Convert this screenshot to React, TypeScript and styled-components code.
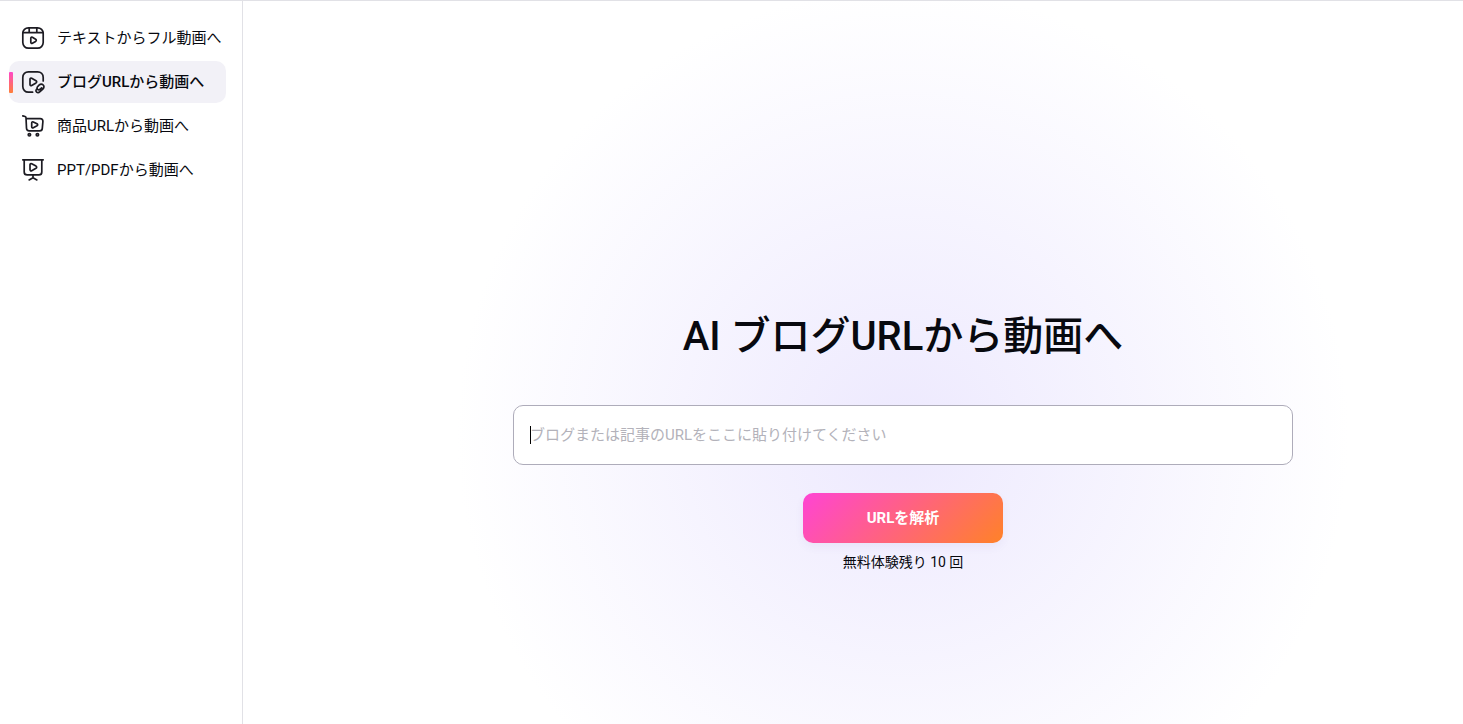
import React from "react";
import styled, { createGlobalStyle } from "styled-components";

const GlobalStyle = createGlobalStyle`
  *, *::before, *::after { box-sizing: border-box; }
  body {
    margin: 0;
    background: #fff;
    color: #08090f;
    font-family: Roboto, "Noto Sans CJK JP", sans-serif;
    font-size: 15px;
    line-height: 24px;
  }
`;

const Page = styled.div`
  display: flex;
  min-height: 100vh;
  border-top: 1px solid #e1e1e6;
`;

const Sidebar = styled.nav`
  flex: none;
  width: 243px;
  padding: 16px 16px 16px 9px;
  border-right: 1px solid #e1e1e6;
`;

const NavList = styled.ul`
  display: flex;
  flex-direction: column;
  gap: 2px;
  margin: 0;
  padding: 0;
  list-style: none;
`;

const NavLink = styled.a<{ $active?: boolean }>`
  display: flex;
  align-items: center;
  height: 42px;
  border-radius: 10px;
  color: inherit;
  text-decoration: none;
  white-space: nowrap;
  font-weight: ${(p) => (p.$active ? 500 : 400)};
  background: ${(p) => (p.$active ? "#f2f1f7" : "transparent")};

  &::before {
    content: "";
    width: 4px;
    height: 21px;
    margin-right: 8px;
    border-radius: 1px;
    background: ${(p) =>
      p.$active ? "linear-gradient(180deg, #ff47c8, #ff7f38)" : "transparent"};
  }
`;

const Icon = styled.svg`
  flex: none;
  width: 24px;
  height: 24px;
  margin-right: 12px;
  fill: none;
  stroke: #1c1b22;
  stroke-width: 1.7;
  stroke-linecap: round;
  stroke-linejoin: round;
`;

const Main = styled.main`
  flex: 1;
  display: flex;
  flex-direction: column;
  align-items: center;
  justify-content: center;
  padding: 160px 0 0 100px;
  background: radial-gradient(
    circle 446px at calc(50% + 50px) 434px,
    #ede9fe,
    #ffffff
  );
`;

const Title = styled.h1`
  margin: 0 0 44px;
  font-size: 40px;
  line-height: 48px;
  font-weight: 500;
`;

const UrlForm = styled.form`
  display: flex;
  flex-direction: column;
  align-items: center;
  width: 100%;
  max-width: 780px;
`;

const UrlField = styled.label`
  display: flex;
  align-items: center;
  width: 100%;
  height: 60px;
  padding: 0 16px;
  border: 1px solid #aeacba;
  border-radius: 10px;
  background: #fff;

  &::before {
    content: "";
    width: 1px;
    height: 18px;
    margin-right: -1px;
    background: #000;
  }
`;

const UrlInput = styled.input`
  flex: 1;
  min-width: 0;
  height: 24px;
  padding: 0;
  border: 0;
  outline: 0;
  background: transparent;
  color: inherit;
  font: inherit;

  &::placeholder {
    color: #b3b2ba;
    opacity: 1;
  }
`;

const AnalyzeButton = styled.button`
  width: 200px;
  height: 50px;
  margin: 28px 0 8px;
  padding: 0;
  border: 0;
  border-radius: 10px;
  background: linear-gradient(135deg, #ff44d4, #ff8228);
  box-shadow: 0 4px 10px rgba(80, 60, 160, 0.06);
  color: #fff;
  font: inherit;
  font-weight: 700;
`;

const Remaining = styled.p`
  margin: 0;
  font-size: 14px;
  line-height: 22px;
`;

const TextToVideoIcon = () => (
  <Icon viewBox="0 0 24 24" aria-hidden="true">
    <rect x="1.8" y="1.8" width="20.4" height="20.4" rx="5.6" />
    <path d="M2 6.7H22M8.2 2V6.5M15.8 2V6.5" />
    <path d="M9.8 12.3C9.8 11.3 10.6 10.9 11.4 11.3L14.6 13.2C15.5 13.8 15.5 14.8 14.6 15.4L11.4 17.2C10.6 17.6 9.8 17.2 9.8 16.2Z" />
  </Icon>
);

const BlogToVideoIcon = () => (
  <Icon viewBox="0 0 24 24" aria-hidden="true">
    <path d="M11.6 22.2H7.4C4.2 22.2 1.8 19.8 1.8 16.6V7.4C1.8 4.2 4.2 1.8 7.4 1.8H16.6C19.8 1.8 22.2 4.2 22.2 7.4V11" />
    <path d="M9 9.3C9 8.3 9.8 7.8 10.7 8.2L15 10.7C15.9 11.3 15.9 12.3 15 12.9L10.7 15.5C9.8 16 9 15.5 9 14.5Z" />
    <path d="M15.7 19C14.7 20.2 14.7 21.4 15.6 22.1C16.6 22.9 17.9 22.7 19 21.7L21.8 19.1C23.2 17.7 23.3 16.1 22.2 15C21.1 13.9 19.3 14 18 15.2L16.9 16.3C15.9 17.4 15.8 18.6 16.6 19.3C17.4 20 18.5 19.8 19.4 19L20.6 17.8" />
  </Icon>
);

const ProductToVideoIcon = () => (
  <Icon viewBox="0 0 24 24" aria-hidden="true">
    <path d="M1.8 1.9L4.1 2.5C4.7 2.7 5 3.1 5 3.7L5.5 14.3C5.6 15.9 6.6 16.9 8.2 16.9H18.6C20.2 16.9 21.2 16 21.3 14.4L21.9 7.5C22 5.7 21 4.6 19.2 4.6H5.2" />
    <path d="M10.7 8.9C10.7 7.9 11.5 7.5 12.3 7.9L16 9.8C16.9 10.4 16.9 11.2 16 11.8L12.3 13.8C11.5 14.2 10.7 13.8 10.7 12.8Z" />
    <circle cx="8.4" cy="20.8" r="1.2" />
    <circle cx="16.4" cy="20.8" r="1.2" />
  </Icon>
);

const SlidesToVideoIcon = () => (
  <Icon viewBox="0 0 24 24" aria-hidden="true">
    <path d="M1.8 1.8H22.2M3.2 2V13.9C3.2 15.8 4.3 16.9 6.2 16.9H17.8C19.7 16.9 20.8 15.8 20.8 13.9V2M12 17V20M12 19.8L8.1 21.9M12 19.8L15.9 21.9" />
    <path d="M9 6.8C9 5.8 9.8 5.3 10.7 5.7L15 8.1C15.9 8.7 15.9 9.7 15 10.3L10.7 12.7C9.8 13.1 9 12.6 9 11.6Z" />
  </Icon>
);

const navItems = [
  { label: "テキストからフル動画へ", href: "#text", Glyph: TextToVideoIcon },
  { label: "ブログURLから動画へ", href: "#blog", Glyph: BlogToVideoIcon, active: true },
  { label: "商品URLから動画へ", href: "#product", Glyph: ProductToVideoIcon },
  { label: "PPT/PDFから動画へ", href: "#slides", Glyph: SlidesToVideoIcon },
];

export default function App() {
  return (
    <>
      <GlobalStyle />
      <Page lang="ja">
        <Sidebar>
          <NavList>
            {navItems.map(({ label, href, Glyph, active }) => (
              <li key={href}>
                <NavLink href={href} $active={active} aria-current={active ? "page" : undefined}>
                  <Glyph />
                  {label}
                </NavLink>
              </li>
            ))}
          </NavList>
        </Sidebar>
        <Main>
          <Title>AI ブログURLから動画へ</Title>
          <UrlForm onSubmit={(e) => e.preventDefault()}>
            <UrlField>
              <UrlInput
                type="url"
                aria-label="ブログURL"
                placeholder="ブログまたは記事のURLをここに貼り付けてください"
              />
            </UrlField>
            <AnalyzeButton type="submit">URLを解析</AnalyzeButton>
          </UrlForm>
          <Remaining>無料体験残り 10 回</Remaining>
        </Main>
      </Page>
    </>
  );
}
